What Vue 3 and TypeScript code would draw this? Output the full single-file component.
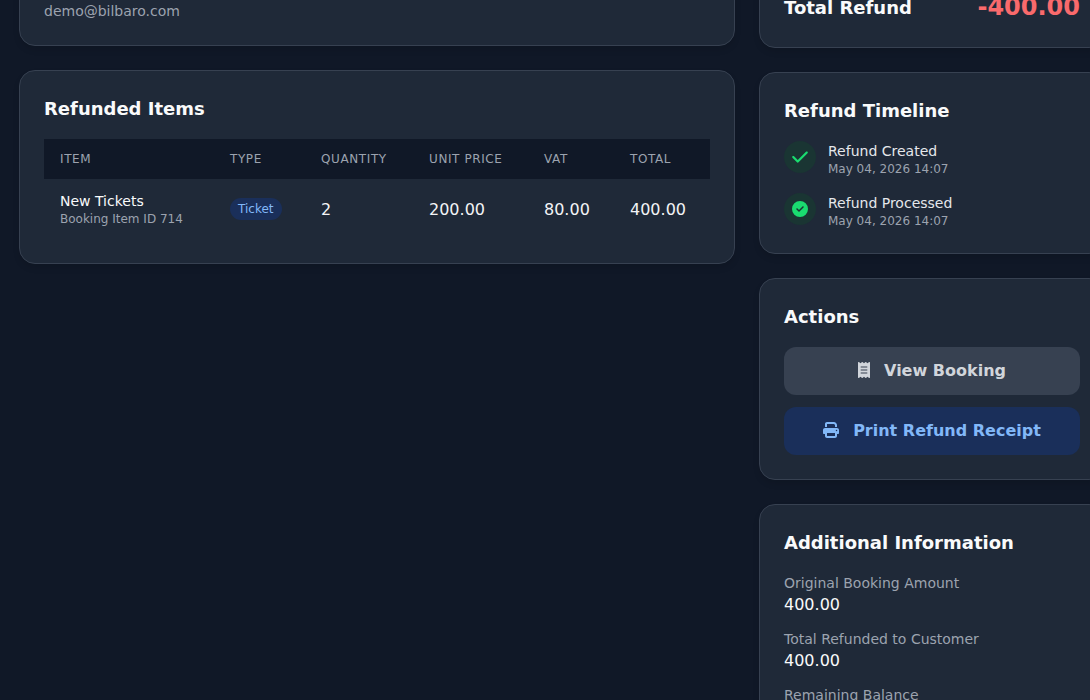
<script setup lang="ts">
interface TimelineEntry { title: string; time: string; solid: boolean }
interface InfoEntry { label: string; value?: string }

const timeline: TimelineEntry[] = [
  { title: 'Refund Created', time: 'May 04, 2026 14:07', solid: false },
  { title: 'Refund Processed', time: 'May 04, 2026 14:07', solid: true },
]
const info: InfoEntry[] = [
  { label: 'Original Booking Amount', value: '400.00' },
  { label: 'Total Refunded to Customer', value: '400.00' },
  { label: 'Remaining Balance', value: '0.00' },
]
const columns = [170, 91, 108, 115, 86, 96]
const headers = ['Item', 'Type', 'Quantity', 'Unit Price', 'VAT', 'Total']
</script>

<template>
  <div class="page">
    <div class="layout">
      <main class="column column-left">
        <section class="card">
          <div class="email">demo@bilbaro.com</div>
        </section>
        <section class="card">
          <h2 class="card-title">Refunded Items</h2>
          <table class="items">
            <colgroup>
              <col v-for="(w, i) in columns" :key="i" :width="w" />
            </colgroup>
            <thead>
              <tr><th v-for="h in headers" :key="h">{{ h }}</th></tr>
            </thead>
            <tbody>
              <tr>
                <td>
                  <div class="item-name">New Tickets</div>
                  <div class="item-sub">Booking Item ID 714</div>
                </td>
                <td><span class="badge">Ticket</span></td>
                <td class="num">2</td>
                <td class="num">200.00</td>
                <td class="num">80.00</td>
                <td class="num">400.00</td>
              </tr>
            </tbody>
          </table>
        </section>
      </main>

      <aside class="column column-right">
        <section class="card">
          <div class="total-row">
            <span class="total-label">Total Refund</span>
            <span class="total-amount">-400.00</span>
          </div>
        </section>

        <section class="card">
          <h2 class="card-title">Refund Timeline</h2>
          <div class="timeline">
            <div v-for="t in timeline" :key="t.title" class="event">
              <span class="event-icon">
                <svg v-if="!t.solid" class="check" viewBox="0 0 448 512" aria-hidden="true">
                  <path d="M438.6 105.4c12.5 12.5 12.5 32.8 0 45.3l-256 256c-12.5 12.5-32.8 12.5-45.3 0l-128-128c-12.5-12.5-12.5-32.8 0-45.3s32.8-12.5 45.3 0L160 338.7 393.4 105.4c12.5-12.5 32.8-12.5 45.3 0z" />
                </svg>
                <svg v-else class="circle-check" viewBox="0 0 512 512" aria-hidden="true">
                  <path d="M256 512A256 256 0 1 0 256 0a256 256 0 1 0 0 512zM369 209L241 337c-9.4 9.4-24.6 9.4-33.9 0l-64-64c-9.4-9.4-9.4-24.6 0-33.9s24.6-9.4 33.9 0l47 47L335 175c9.4-9.4 24.6-9.4 33.9 0s9.4 24.6 0 33.9z" />
                </svg>
              </span>
              <div>
                <div class="event-title">{{ t.title }}</div>
                <div class="event-time">{{ t.time }}</div>
              </div>
            </div>
          </div>
        </section>

        <section class="card">
          <h2 class="card-title">Actions</h2>
          <div class="actions">
            <button class="btn btn-gray" type="button">
              <svg class="btn-icon receipt" viewBox="0 0 384 512" aria-hidden="true">
                <path d="M14 2.2C22.5-1.7 32.5-.3 39.6 5.8L80 40.4 120.4 5.8c9-7.7 22.3-7.7 31.2 0L192 40.4 232.4 5.8c9-7.7 22.2-7.7 31.2 0L304 40.4 344.4 5.8c7.1-6.1 17.1-7.5 25.6-3.6s14 12.4 14 21.8V488c0 9.4-5.5 17.9-14 21.8s-18.5 2.5-25.6-3.6L304 471.6l-40.4 34.6c-9 7.7-22.3 7.7-31.2 0L192 471.6l-40.4 34.6c-9 7.7-22.2 7.7-31.2 0L80 471.6 39.6 506.2c-7.1 6.1-17.1 7.5-25.6 3.6S0 497.4 0 488V24C0 14.6 5.5 6.1 14 2.2zM96 144c-8.8 0-16 7.2-16 16s7.2 16 16 16H288c8.8 0 16-7.2 16-16s-7.2-16-16-16H96zM80 352c0 8.8 7.2 16 16 16H288c8.8 0 16-7.2 16-16s-7.2-16-16-16H96c-8.8 0-16 7.2-16 16zM96 240c-8.8 0-16 7.2-16 16s7.2 16 16 16H288c8.8 0 16-7.2 16-16s-7.2-16-16-16H96z" />
              </svg>
              View Booking
            </button>
            <button class="btn btn-blue" type="button">
              <svg class="btn-icon printer" viewBox="0 0 512 512" aria-hidden="true">
                <path d="M128 0C92.7 0 64 28.7 64 64v96h64V64H354.7L384 93.3V160h64V93.3c0-17-6.7-33.3-18.7-45.3L400 18.7C388 6.7 371.7 0 354.7 0H128zM384 352v32 64H128V384 368 352H384zm64 32h32c17.7 0 32-14.3 32-32V256c0-35.3-28.7-64-64-64H64c-35.3 0-64 28.7-64 64v96c0 17.7 14.3 32 32 32H64v64c0 35.3 28.7 64 64 64H384c35.3 0 64-28.7 64-64V384zM432 248a24 24 0 1 1 0 48 24 24 0 1 1 0-48z" />
              </svg>
              Print Refund Receipt
            </button>
          </div>
        </section>

        <section class="card">
          <h2 class="card-title">Additional Information</h2>
          <div class="info">
            <div v-for="row in info" :key="row.label">
              <div class="info-label">{{ row.label }}</div>
              <div class="info-value">{{ row.value }}</div>
            </div>
          </div>
        </section>
      </aside>
    </div>
  </div>
</template>

<style scoped>
.page {
  width: 1090px;
  height: 700px;
  overflow: hidden;
  background: #101827;
  font-family: "DejaVu Sans", sans-serif;
  color: #f9fafb;
}
.layout {
  display: grid;
  grid-template-columns: 716px 346px;
  gap: 24px;
  align-items: start;
  padding-left: 19px;
}
.column {
  display: flex;
  flex-direction: column;
  gap: 24px;
}
.column-left { margin-top: -24px; }
.column-right { margin-top: -34px; }
.card {
  background: #1f2938;
  border: 1px solid #374151;
  border-radius: 16px;
  padding: 24px;
  box-shadow: 0 4px 6px rgba(0, 0, 0, 0.1);
}
.card-title {
  margin: 0 0 16px;
  font-size: 18px;
  line-height: 28px;
  font-weight: 700;
  color: #f9fafb;
}
.email {
  font-size: 14px;
  line-height: 20px;
  color: #9ca3af;
}
.items {
  width: 666px;
  border-collapse: collapse;
  table-layout: fixed;
}
.items th {
  height: 40px;
  padding: 0 16px;
  background: #101827;
  font-size: 12px;
  font-weight: 400;
  text-align: left;
  text-transform: uppercase;
  letter-spacing: 0.6px;
  color: #9ca3af;
}
.items td {
  padding: 12px 16px;
  font-size: 16px;
  line-height: 24px;
  color: #f3f4f6;
  vertical-align: middle;
}
.items td.num {
  padding-top: 13px;
  padding-bottom: 11px;
}
.item-name {
  font-size: 14px;
  line-height: 20px;
  color: #f9fafb;
}
.item-sub {
  font-size: 12px;
  line-height: 16px;
  color: #9ca3af;
}
.badge {
  display: block;
  width: fit-content;
  padding: 3px 8px;
  border-radius: 999px;
  background: #1a2f5a;
  color: #82b8f8;
  font-size: 12px;
  line-height: 16px;
}
.total-row {
  display: flex;
  align-items: center;
  justify-content: space-between;
}
.total-label {
  font-size: 18px;
  font-weight: 700;
}
.total-amount {
  font-size: 24px;
  line-height: 32px;
  font-weight: 700;
  color: #f96a6c;
}
.timeline {
  display: flex;
  flex-direction: column;
  gap: 16px;
}
.event {
  display: flex;
  align-items: flex-start;
  gap: 12px;
}
.event-icon {
  width: 32px;
  height: 32px;
  flex: none;
  border-radius: 50%;
  background: #1a3533;
  display: flex;
  align-items: center;
  justify-content: center;
  fill: #1adc70;
}
.check { width: 16px; height: 18px; }
.circle-check { width: 16px; height: 16px; }
.event-title {
  font-size: 14px;
  line-height: 20px;
  color: #e5e7eb;
}
.event-time {
  font-size: 12px;
  line-height: 16px;
  color: #9ca3af;
}
.actions {
  display: flex;
  flex-direction: column;
  gap: 12px;
}
.btn {
  height: 48px;
  border: 0;
  border-radius: 12px;
  padding: 0 0 2px;
  display: flex;
  align-items: center;
  justify-content: center;
  gap: 14px;
  font-family: inherit;
  font-size: 16px;
  font-weight: 700;
}
.btn-gray { background: #374151; color: #d1d5db; }
.btn-blue { background: #1a2f5a; color: #82b8f8; }
.btn-icon { height: 16px; fill: currentColor; }
.receipt { width: 12px; }
.printer { width: 16px; }
.info {
  display: flex;
  flex-direction: column;
  gap: 12px;
}
.info-label {
  font-size: 14px;
  line-height: 20px;
  color: #9ca3af;
}
.info-value {
  font-size: 16px;
  line-height: 24px;
  color: #f9fafb;
}
</style>

<style>
html, body { background: #101827; overflow: hidden; }
</style>
